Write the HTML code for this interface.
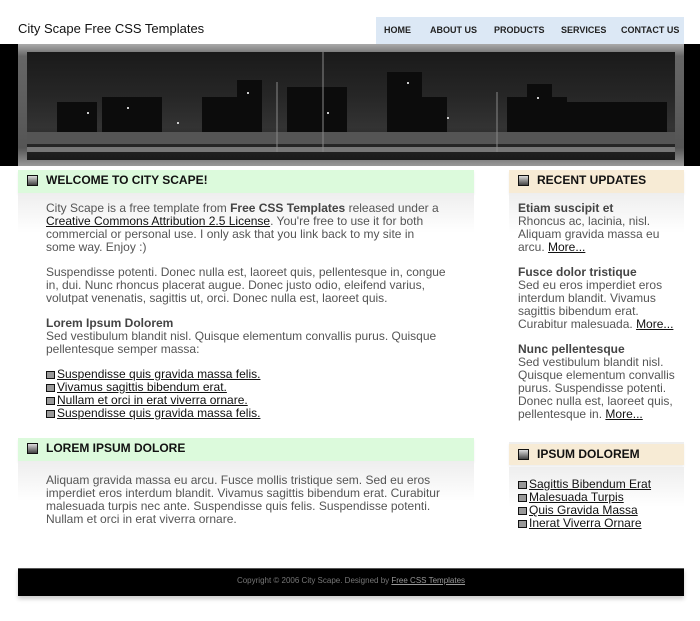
<!DOCTYPE html>
<html><head><meta charset="utf-8"><style>
*{margin:0;padding:0;box-sizing:border-box}
body{width:700px;height:621px;background:#fff;font-family:"Liberation Sans",Tahoma,sans-serif;font-size:12px;color:#555;position:relative;overflow:hidden}
.abs{position:absolute}
#logo{left:18px;top:21px;font-size:13px;color:#111}
#nav{left:376px;top:17px;width:308px;height:27px;background:#dce8f5;font-size:9px;font-weight:bold;color:#222}
#nav span{position:absolute;top:8px}
#band{left:0;top:44px;width:700px;height:122px;background:#000}
#frame{left:18px;top:44px;width:666px;height:122px;background:linear-gradient(#aaa,#666 10%,#555 85%,#999)}
#img{left:27px;top:52px;width:648px;height:108px;background:linear-gradient(#1a1a1a,#262626 40%,#333 70%,#1a1a1a);overflow:hidden}
.hd{height:23px;font-size:12px;font-weight:bold;color:#111;padding:3px 0 0 28px;position:absolute}
.hd:before{content:"";position:absolute;left:9px;top:5px;width:9px;height:9px;background:linear-gradient(#ddd,#444);border:1px solid #111}
.g{background:#dcfadc;box-shadow:0 2px 2px #f0f0f0}
.b{background:#f7ebd5;box-shadow:0 2px 2px #f0f0f0}
p{line-height:13px;margin-bottom:12px}
a{color:#111;text-decoration:underline}
strong{color:#444}
ul{list-style:none;line-height:13px}
li{padding-left:11px;position:relative}
li:before{content:"";position:absolute;left:0;top:3px;width:7px;height:6px;background:#999;border:1px solid #111}
.fade{background:linear-gradient(#eee,#fff 40px)}
</style></head><body>
<div id="logo" class="abs">City Scape Free CSS Templates</div>
<div id="nav" class="abs"><span style="left:8px">HOME</span><span style="left:54px">ABOUT US</span><span style="left:118px">PRODUCTS</span><span style="left:185px">SERVICES</span><span style="left:245px">CONTACT US</span></div>
<div id="band" class="abs"></div>
<div id="frame" class="abs"></div>
<div id="img" class="abs">
<svg width="648" height="108">
<g fill="#0c0c0c">
<rect x="30" y="50" width="40" height="40"/><rect x="75" y="45" width="60" height="45"/><rect x="175" y="45" width="50" height="45"/><rect x="210" y="28" width="25" height="62"/><rect x="260" y="35" width="60" height="55"/><rect x="360" y="20" width="35" height="70"/><rect x="390" y="45" width="30" height="45"/><rect x="480" y="45" width="60" height="45"/><rect x="500" y="32" width="25" height="58"/><rect x="540" y="50" width="100" height="40"/>
</g>
<g fill="#555"><rect x="0" y="80" width="648" height="12"/></g>
<g fill="#777"><rect x="0" y="95" width="648" height="5"/></g>
<g stroke="#888"><line x1="296" y1="0" x2="296" y2="100"/><line x1="470" y1="40" x2="470" y2="100"/><line x1="250" y1="30" x2="250" y2="100"/></g>
<g fill="#ccc"><rect x="60" y="60" width="2" height="2"/><rect x="100" y="55" width="2" height="2"/><rect x="220" y="40" width="2" height="2"/><rect x="380" y="30" width="2" height="2"/><rect x="510" y="45" width="2" height="2"/><rect x="300" y="60" width="2" height="2"/><rect x="150" y="70" width="2" height="2"/><rect x="420" y="65" width="2" height="2"/></g>
</svg></div>

<div class="hd g" style="left:18px;top:170px;width:456px">WELCOME TO CITY SCAPE!</div>
<div class="abs fade" style="left:18px;top:193px;width:456px;height:40px"></div>
<div class="abs" style="left:46px;top:202px;width:400px">
<p>City Scape is a free template from <strong>Free CSS Templates</strong> released under a <a>Creative Commons Attribution 2.5 License</a>. You're free to use it for both commercial or personal use. I only ask that you link back to my site in some way. Enjoy :)</p>
<p>Suspendisse potenti. Donec nulla est, laoreet quis, pellentesque in, congue in, dui. Nunc rhoncus placerat augue. Donec justo odio, eleifend varius, volutpat venenatis, sagittis ut, orci. Donec nulla est, laoreet quis.</p>
<p><strong>Lorem Ipsum Dolorem</strong><br>Sed vestibulum blandit nisl. Quisque elementum convallis purus. Quisque pellentesque semper massa:</p>
<ul><li><a>Suspendisse quis gravida massa felis.</a></li><li><a>Vivamus sagittis bibendum erat.</a></li><li><a>Nullam et orci in erat viverra ornare.</a></li><li><a>Suspendisse quis gravida massa felis.</a></li></ul>
</div>

<div class="hd g" style="left:18px;top:438px;width:456px">LOREM IPSUM DOLORE</div>
<div class="abs fade" style="left:18px;top:461px;width:456px;height:40px"></div>
<div class="abs" style="left:46px;top:474px;width:400px"><p>Aliquam gravida massa eu arcu. Fusce mollis tristique sem. Sed eu eros imperdiet eros interdum blandit. Vivamus sagittis bibendum erat. Curabitur malesuada turpis nec ante. Suspendisse quis felis. Suspendisse potenti. Nullam et orci in erat viverra ornare.</p></div>

<div class="hd b" style="left:509px;top:170px;width:175px">RECENT UPDATES</div>
<div class="abs fade" style="left:509px;top:193px;width:175px;height:40px"></div>
<div class="abs" style="left:518px;top:202px;width:160px">
<p><strong>Etiam suscipit et</strong><br>Rhoncus ac, lacinia, nisl. Aliquam gravida massa eu arcu. <a>More...</a></p>
<p><strong>Fusce dolor tristique</strong><br>Sed eu eros imperdiet eros interdum blandit. Vivamus sagittis bibendum erat. Curabitur malesuada. <a>More...</a></p>
<p><strong>Nunc pellentesque</strong><br>Sed vestibulum blandit nisl. Quisque elementum convallis purus. Suspendisse potenti. Donec nulla est, laoreet quis, pellentesque in. <a>More...</a></p>
</div>
<div class="hd b" style="left:509px;top:442px;width:175px;border-top:2px solid #eee">IPSUM DOLOREM</div>
<div class="abs fade" style="left:509px;top:467px;width:175px;height:40px"></div>
<div class="abs" style="left:518px;top:478px;width:160px"><ul><li><a>Sagittis Bibendum Erat</a></li><li><a>Malesuada Turpis</a></li><li><a>Quis Gravida Massa</a></li><li><a>Inerat Viverra Ornare</a></li></ul></div>

<div class="abs" style="left:18px;top:568px;width:666px;height:28px;background:#000;border-top:1px solid #555;box-shadow:0 3px 4px #ccc;color:#777;font-size:8px;text-align:center;padding-top:7px">Copyright © 2006 City Scape. Designed by <a style="color:#999">Free CSS Templates</a></div>
</body></html>
